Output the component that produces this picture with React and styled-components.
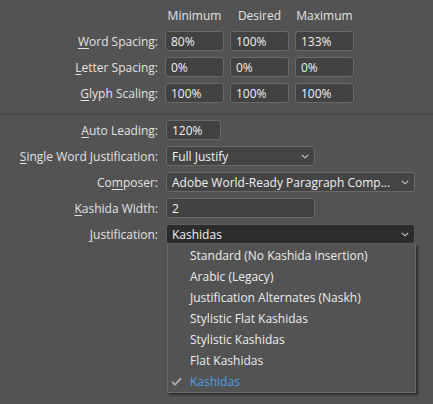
import React from "react";
import styled, { createGlobalStyle } from "styled-components";

const GlobalStyle = createGlobalStyle`
  html, body {
    margin: 0;
    background: #535353;
  }
  body {
    font-family: "Open Sans", "Noto Sans", sans-serif;
    font-size: 12px;
    color: #e2e2e2;
  }
`;

const spacingRows = [
  { key: "W", rest: "ord Spacing:", values: ["80%", "100%", "133%"] },
  { key: "L", rest: "etter Spacing:", values: ["0%", "0%", "0%"] },
  { key: "G", rest: "lyph Scaling:", values: ["100%", "100%", "100%"] },
];

const menuItems = [
  "Standard (No Kashida insertion)",
  "Arabic (Legacy)",
  "Justification Alternates (Naskh)",
  "Stylistic Flat Kashidas",
  "Stylistic Kashidas",
  "Flat Kashidas",
  "Kashidas",
];

function Chevron() {
  return (
    <ChevronIcon width="8" height="5" viewBox="0 0 8 5">
      <path d="M0.8 0.8 L4 3.8 L7.2 0.8" fill="none" stroke="#cfcfcf" strokeWidth="1.1" />
    </ChevronIcon>
  );
}

function Check() {
  return (
    <CheckIcon width="11" height="9" viewBox="0 0 11 9">
      <path d="M1 4.6 L4 7.6 L10 1.2" fill="none" stroke="#a8a8a8" strokeWidth="2" />
    </CheckIcon>
  );
}

function Label({ k, pre, rest }) {
  return (
    <LabelText>
      {pre}
      <u>{k}</u>
      {rest}
    </LabelText>
  );
}

export default function App() {
  const selected = "Kashidas";
  return (
    <Panel>
      <GlobalStyle />
      <SpacingGrid>
        <span />
        <ColHead>Minimum</ColHead>
        <ColHead>Desired</ColHead>
        <ColHead>Maximum</ColHead>
        {spacingRows.map((row) => (
          <React.Fragment key={row.key}>
            <Label k={row.key} rest={row.rest} />
            {row.values.map((v, i) => (
              <Field key={i}>{v}</Field>
            ))}
          </React.Fragment>
        ))}
      </SpacingGrid>

      <Divider />

      <OptionsGrid>
        <Label k="A" rest="uto Leading:" />
        <Field $width={55}>120%</Field>

        <Label k="S" rest="ingle Word Justification:" />
        <Select $width={149}>
          Full Justify
          <Chevron />
        </Select>

        <Label pre="Co" k="m" rest="poser:" />
        <Select $width={249}>
          Adobe World-Ready Paragraph Comp...
          <Chevron />
        </Select>

        <Label k="K" rest="ashida Width:" />
        <Field $width={149}>2</Field>

        <Label k="J" rest="ustification:" />
        <SelectWrap>
          <Select $width={249} $open>
            Kashidas
            <Chevron />
          </Select>
          <Menu>
            {menuItems.map((item) => (
              <MenuItem key={item} $active={item === selected}>
                <CheckSlot>{item === selected && <Check />}</CheckSlot>
                {item}
              </MenuItem>
            ))}
          </Menu>
        </SelectWrap>
      </OptionsGrid>
    </Panel>
  );
}

// Components
const Panel = styled.div`
  width: 433px;
  height: 404px;
  padding-top: 5px;
  box-sizing: border-box;
`;

const SpacingGrid = styled.div`
  display: grid;
  grid-template-columns: 159px 59px 59px 59px;
  grid-auto-rows: 20px;
  column-gap: 6px;
  row-gap: 6px;
  align-items: center;
  padding-bottom: 1px;
`;

const ColHead = styled.div`
  text-align: center;
  color: #e2e2e2;
`;

const LabelText = styled.div`
  text-align: right;
  padding-right: 1px;
  white-space: nowrap;
  color: #e2e2e2;

  u {
    text-underline-offset: 2px;
  }
`;

const Field = styled.div`
  box-sizing: border-box;
  height: 20px;
  width: ${(props) => (props.$width ? `${props.$width}px` : "auto")};
  display: flex;
  align-items: center;
  padding: 0 5px;
  background: #424242;
  border: 1px solid #696969;
  border-radius: 3px;
  color: #f0f0f0;
  white-space: nowrap;
`;

const Divider = styled.div`
  height: 1px;
  background: #464646;
  margin: 10px 0 5px;
`;

const OptionsGrid = styled.div`
  display: grid;
  grid-template-columns: 159px auto;
  justify-content: start;
  grid-auto-rows: 20px;
  column-gap: 7px;
  row-gap: 6px;
  align-items: center;
`;

const Select = styled(Field)`
  justify-content: space-between;
  background: ${(props) => (props.$open ? "#2c2c2c" : "#444444")};
  border-color: ${(props) => (props.$open ? "#5c5c5c" : "#696969")};
  overflow: hidden;
`;

const ChevronIcon = styled.svg`
  flex: none;
  margin-right: 0px;
`;

const SelectWrap = styled.div`
  position: relative;
`;

const Menu = styled.div`
  position: absolute;
  top: 20px;
  left: 1px;
  width: 249px;
  box-sizing: border-box;
  padding: 1px 0 0;
  background: #535353;
  border: 1px solid #6a6a6a;
  border-top: none;
  box-shadow: 2px 2px 2px rgba(0, 0, 0, 0.45);
  z-index: 2;
`;

const MenuItem = styled.div`
  display: flex;
  align-items: center;
  height: 21px;
  white-space: nowrap;
  color: ${(props) => (props.$active ? "#4a9fec" : "#ececec")};
`;

const CheckSlot = styled.span`
  width: 22px;
  flex: none;
  display: flex;
  justify-content: flex-start;
  padding-left: 3px;
  box-sizing: border-box;
`;

const CheckIcon = styled.svg`
  display: block;
`;
